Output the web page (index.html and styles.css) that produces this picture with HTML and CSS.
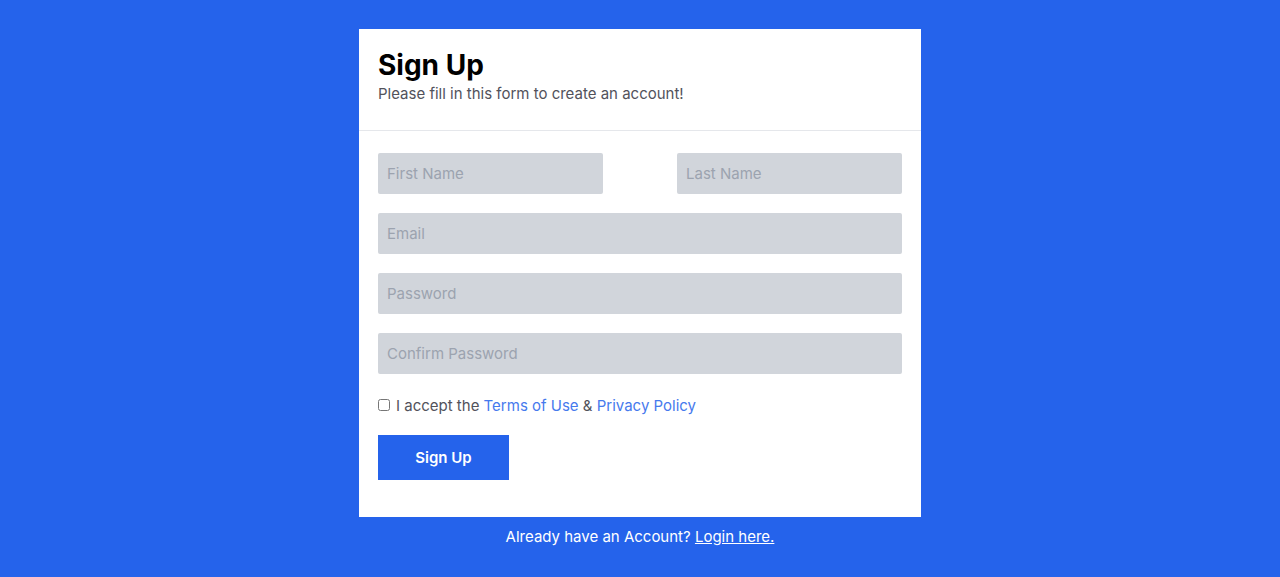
FILE: index.html
```html
<!DOCTYPE html>
<html lang="en">
<head>
<meta charset="utf-8">
<title>Sign Up</title>
<link rel="stylesheet" href="styles.css">
</head>
<body>
<main class="page">
  <div class="card">
    <div class="card-head">
      <h1 class="title">Sign Up</h1>
      <p class="subtitle">Please fill in this form to create an account!</p>
    </div>
    <form class="form">
      <div class="row">
        <input class="field half" type="text" placeholder="First Name">
        <input class="field half" type="text" placeholder="Last Name">
      </div>
      <input class="field" type="email" placeholder="Email">
      <input class="field" type="password" placeholder="Password">
      <input class="field" type="password" placeholder="Confirm Password">
      <label class="accept"><input class="check" type="checkbox">I accept the <a class="link" href="#">Terms of Use</a> &amp; <a class="link" href="#">Privacy Policy</a></label>
      <div><button class="btn" type="button">Sign Up</button></div>
    </form>
  </div>
  <p class="foot">Already have an Account? <a class="foot-link" href="#">Login here.</a></p>
</main>
</body>
</html>
```
FILE: styles.css
```css
* { box-sizing: border-box; }
html, body { margin: 0; padding: 0; }
body {
  background: #2563eb;
  font-family: Inter, "Noto Sans", sans-serif;
  height: 577px;
  overflow: hidden;
}
.page {
  display: flex;
  flex-direction: column;
  align-items: center;
  padding-top: 29px;
}
.card {
  width: 562px;
  background: #fff;
}
.card-head {
  padding: 19px 19px 0;
  height: 102px;
  border-bottom: 1px solid #e5e7eb;
}
.title {
  margin: 0;
  font-size: 28px;
  line-height: 34px;
  font-weight: 700;
  color: #000;
}
.subtitle {
  margin: 2px 0 0;
  font-size: 15px;
  line-height: 20px;
  color: #52525b;
}
.form {
  display: flex;
  flex-direction: column;
  gap: 19px;
  padding: 22px 19px 37px;
}
.row {
  display: flex;
  justify-content: space-between;
}
.field {
  display: block;
  width: 100%;
  height: 41px;
  border: none;
  border-radius: 2px;
  background: #d1d5db;
  padding: 0 9px;
  font-family: inherit;
  font-size: 15px;
  color: #374151;
  outline: none;
}
.field.half { width: 225px; }
.field::placeholder { color: #9ca3af; }
.accept {
  display: flex;
  align-items: center;
  font-size: 15px;
  color: #52525b;
  height: 24px;
  margin-top: 0;
  white-space: pre;
}
.check {
  margin: 0 6px 0 0;
  width: 12px;
  height: 12px;
}
.link { color: #2563eb; text-decoration: none; opacity: 0.85; }
.btn {
  width: 131px;
  height: 45px;
  border: none;
  background: #2563eb;
  color: #fff;
  font-family: inherit;
  font-size: 15px;
  font-weight: 600;
  margin-top: -1px;
}
.foot {
  margin: 11px 0 0;
  font-size: 15px;
  line-height: 18px;
  color: #fff;
}
.foot-link { color: #fff; text-decoration: underline; }
```
